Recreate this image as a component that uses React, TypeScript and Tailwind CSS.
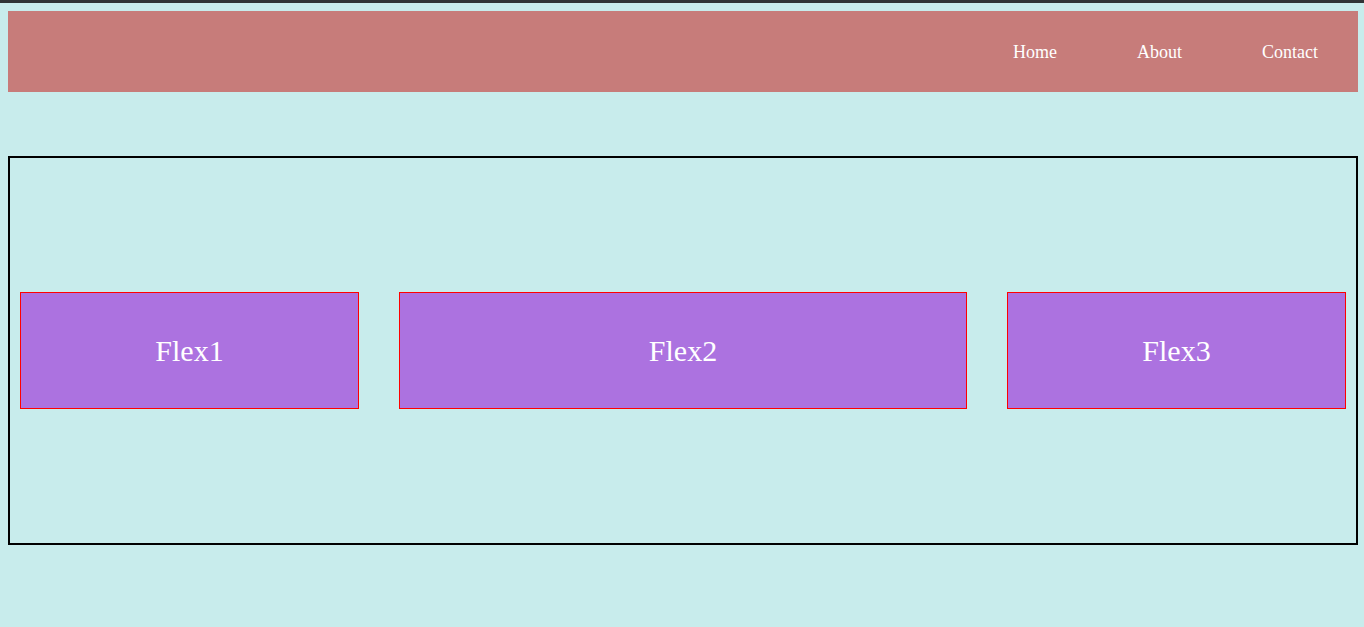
export default function App() {
  const boxes = [
    { label: "Flex1", width: "w-[339px]" },
    { label: "Flex2", width: "w-[568px]" },
    { label: "Flex3", width: "w-[339px]" },
  ];

  return (
    <div className="min-h-[627px] bg-[#c8ecec] font-['Liberation_Serif',serif]">
      <div className="h-[3px] bg-[#303436]" />
      <div className="px-2 pt-2">
        {/* header */}
        <header className="flex h-[81px] w-[1350px] items-center justify-end bg-[#c77c7a] pr-10">
          <nav className="flex items-center gap-[80px] pt-[2px] text-[18px] text-white">
            <a>Home</a>
            <a>About</a>
            <a>Contact</a>
          </nav>
        </header>

        {/* flex container */}
        <div className="mt-16 flex h-[389px] w-[1350px] items-center justify-between border-2 border-black px-[10px]">
          {boxes.map((b) => (
            <div
              key={b.label}
              className={`${b.width} flex h-[117px] items-center justify-center border border-[#ff0000] bg-[#ac72e0] text-[30px] text-white`}
            >
              {b.label}
            </div>
          ))}
        </div>
      </div>
    </div>
  );
}
